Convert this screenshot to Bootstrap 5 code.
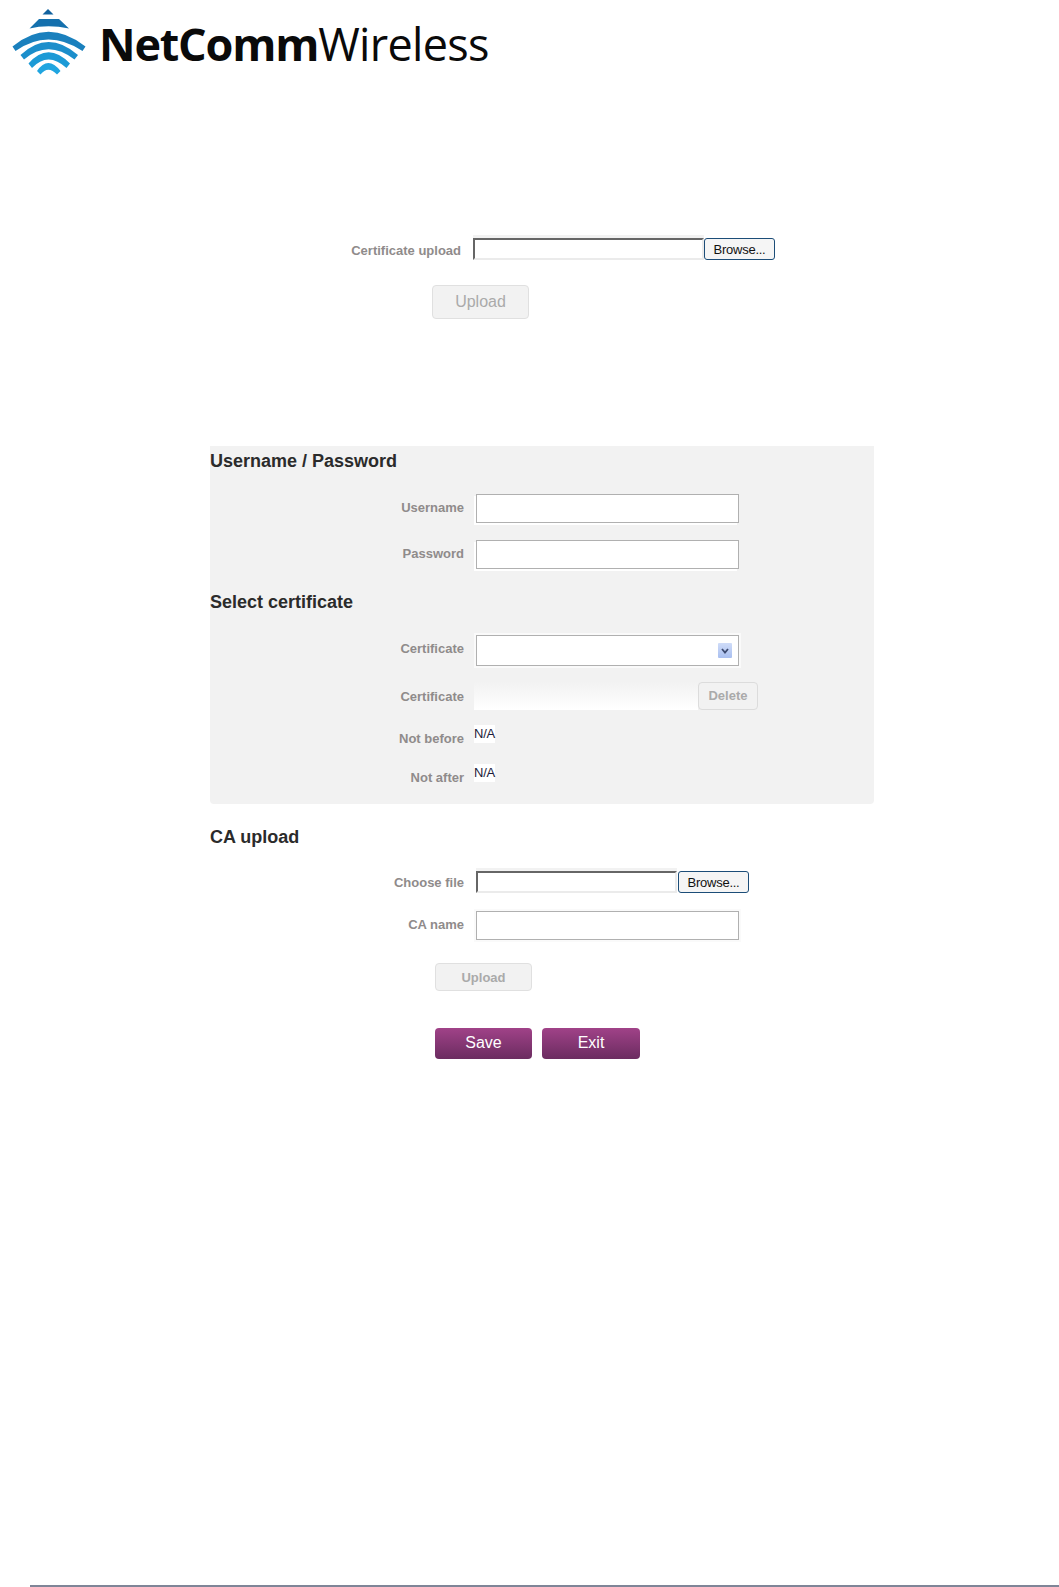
<!DOCTYPE html>
<html lang="en">
<head>
<meta charset="utf-8">
<title>Certificate upload</title>
<link href="https://cdn.jsdelivr.net/npm/bootstrap@5.3.0/dist/css/bootstrap.min.css" rel="stylesheet">
<style>
html,body{margin:0;padding:0;background:#fff;}
body{width:1059px;height:1587px;overflow:hidden;position:relative;font-family:"Liberation Sans",Arial,sans-serif;font-size:13px;color:#222;}
.logo-bar{height:85px;padding:9px 0 0 12px;align-items:flex-start;}
.logo-word{font-family:"Open Sans",sans-serif;font-size:45px;line-height:1;color:#0a0a0a;margin:12px 0 0 13px;white-space:nowrap;}
.logo-word b{font-weight:700;letter-spacing:-1.2px;}
.logo-word span{font-weight:400;letter-spacing:-.7px;}
.top-form{margin:153px 0 0 0;}
.f-label{font-weight:700;color:#8f8b8b;font-size:13px;text-align:right;flex:none;line-height:15px;}
.file-box{background:#fff;border:solid #ebebeb;border-width:0 2px 2px 0;border-top:2px solid #666;border-left:2px solid #666;height:22px;flex:none;box-shadow:0 -3px 0 #f2f2f2;}
.browse{flex:none;background:#f5f5f5;border:1px solid #1c4d78;border-radius:3px;color:#111;font-size:13px;letter-spacing:-.25px;line-height:20px;height:22px;padding:1px 0 0;text-align:center;position:relative;}
.off-btn{display:block;background:#f2f2f2;border:1px solid #e0e0e0;border-radius:4px;color:#aaa;padding:0;text-align:center;}
.panel-col{margin-left:210px;width:664px;}
.grey-panel{background:#f2f2f2;height:358px;margin-top:127px;border-radius:0 0 4px 4px;}
.sec-title{font-size:18px;font-weight:700;color:#2b2b2b;line-height:20px;margin:0;}
.t-in{flex:none;display:block;width:263px;background:#fff;border:1px solid #b0b0b0;box-shadow:-2px 2px 0 #fff;}
.sel-in{box-shadow:0 0 0 2px #fafafa;}
.drop-arrow{position:absolute;right:6px;top:7px;width:14px;height:15px;background:linear-gradient(#cfdcf8,#a9bff0);border-radius:1px;display:flex;align-items:center;justify-content:center;}
.cert-blank{width:224px;height:28px;flex:none;background:linear-gradient(#f2f2f2,#fff);}
.del-btn{flex:none;width:60px;height:28px;background:#f2f2f2;border:1px solid #dcdcdc;border-radius:4px;color:#aaa;font-weight:700;font-size:13px;padding:0;text-align:center;}
.na-val{flex:none;width:21px;background:#fff;color:#1b1b3a;font-size:13px;line-height:17px;height:18px;letter-spacing:-.2px;white-space:nowrap;}
.act-btn{display:block;width:97px;height:31px;background:linear-gradient(#a04288,#6b2c60);border:0;border-radius:4px;color:#fff;font-size:16px;padding:0 0 2px;text-align:center;}
.foot-rule{position:absolute;left:30px;right:0;bottom:0;height:2px;background:#7f8597;}
</style>
</head>
<body>
<header class="logo-bar d-flex">
<svg width="74" height="66" viewBox="12 9 74 66" aria-hidden="true">
<path d="M48 9L53.500 14.500H42.500Z" fill="#11629f"/>
<path d="M39 19H59L69 28.500Q48 24 29.500 28.500Z" fill="#1470ad"/>
<path d="M12.500 46.500Q48 17 85.500 46.500L82.500 51Q48 28 15.500 51Z" fill="#1a80bd"/>
<path d="M20.500 55Q48 29 78 55L74.500 59.500Q48 39 24 59.500Z" fill="#1b8ecb"/>
<path d="M28.500 63.500Q48 41 70 63.500L66.500 68Q48 51 32 68Z" fill="#1c9ad6"/>
<path d="M37 71Q48 55 60.500 71L57 74.500Q48 65 40.500 74.500Z" fill="#20a5e0"/>
</svg>
<div class="logo-word"><b>NetComm</b><span>Wireless</span></div>
</header>

<section class="top-form">
<div class="d-flex align-items-center">
<div class="f-label" style="width:461px;padding-top:2px">Certificate upload</div>
<div class="file-box" style="width:231px;margin-left:12px"></div>
<button type="button" class="browse" style="width:71px">Browse...</button>
</div>
<button type="button" class="off-btn" style="width:97px;height:34px;margin:25px 0 0 432px;font-size:16px">Upload</button>
</section>

<main class="panel-col">
<section class="grey-panel">
<h2 class="sec-title" style="padding-top:5px;height:25px">Username / Password</h2>
<div class="d-flex" style="margin-top:23px">
<div class="f-label" style="width:254px;padding-top:6px">Username</div>
<input type="text" class="t-in" style="height:29px;margin-left:12px">
</div>
<div class="d-flex" style="margin-top:17px">
<div class="f-label" style="width:254px;padding-top:6px">Password</div>
<input type="text" class="t-in" style="height:29px;margin-left:12px">
</div>
<h2 class="sec-title" style="margin-top:23px">Select certificate</h2>
<div class="d-flex" style="margin-top:23px">
<div class="f-label" style="width:254px;padding-top:6px">Certificate</div>
<div class="t-in sel-in position-relative" style="height:31px;margin-left:12px">
<span class="drop-arrow"><svg width="8" height="6" viewBox="0 0 8 6"><path d="M1 1L4 4.500L7 1" fill="none" stroke="#3c4a70" stroke-width="1.800"/></svg></span>
</div>
</div>
<div class="d-flex" style="margin-top:16px">
<div class="f-label" style="width:254px;padding-top:7px">Certificate</div>
<div class="cert-blank" style="margin-left:10px"></div>
<button type="button" class="del-btn">Delete</button>
</div>
<div class="d-flex" style="margin-top:15px">
<div class="f-label" style="width:254px;padding-top:6px">Not before</div>
<div class="na-val" style="margin-left:10px">N/A</div>
</div>
<div class="d-flex" style="margin-top:18px">
<div class="f-label" style="width:254px;padding-top:6px">Not after</div>
<div class="na-val" style="margin-left:10px">N/A</div>
</div>
</section>
<h2 class="sec-title" style="margin-top:23px">CA upload</h2>
<div class="d-flex align-items-center" style="margin-top:24px">
<div class="f-label" style="width:254px">Choose file</div>
<div class="file-box" style="width:201px;margin-left:12px"></div>
<button type="button" class="browse" style="width:71px;margin-left:1px">Browse...</button>
</div>
<div class="d-flex" style="margin-top:18px">
<div class="f-label" style="width:254px;padding-top:6px">CA name</div>
<input type="text" class="t-in sel-in" style="height:29px;margin-left:12px">
</div>
<button type="button" class="off-btn" style="width:97px;height:28px;margin:23px 0 0 225px;padding-top:1px;font-size:13px;font-weight:700">Upload</button>
<div class="d-flex" style="margin:37px 0 0 225px;gap:10px">
<button type="button" class="act-btn">Save</button>
<button type="button" class="act-btn" style="width:98px">Exit</button>
</div>
</main>
<div class="foot-rule"></div>
<script src="https://cdn.jsdelivr.net/npm/bootstrap@5.3.0/dist/js/bootstrap.bundle.min.js"></script>
</body>
</html>
